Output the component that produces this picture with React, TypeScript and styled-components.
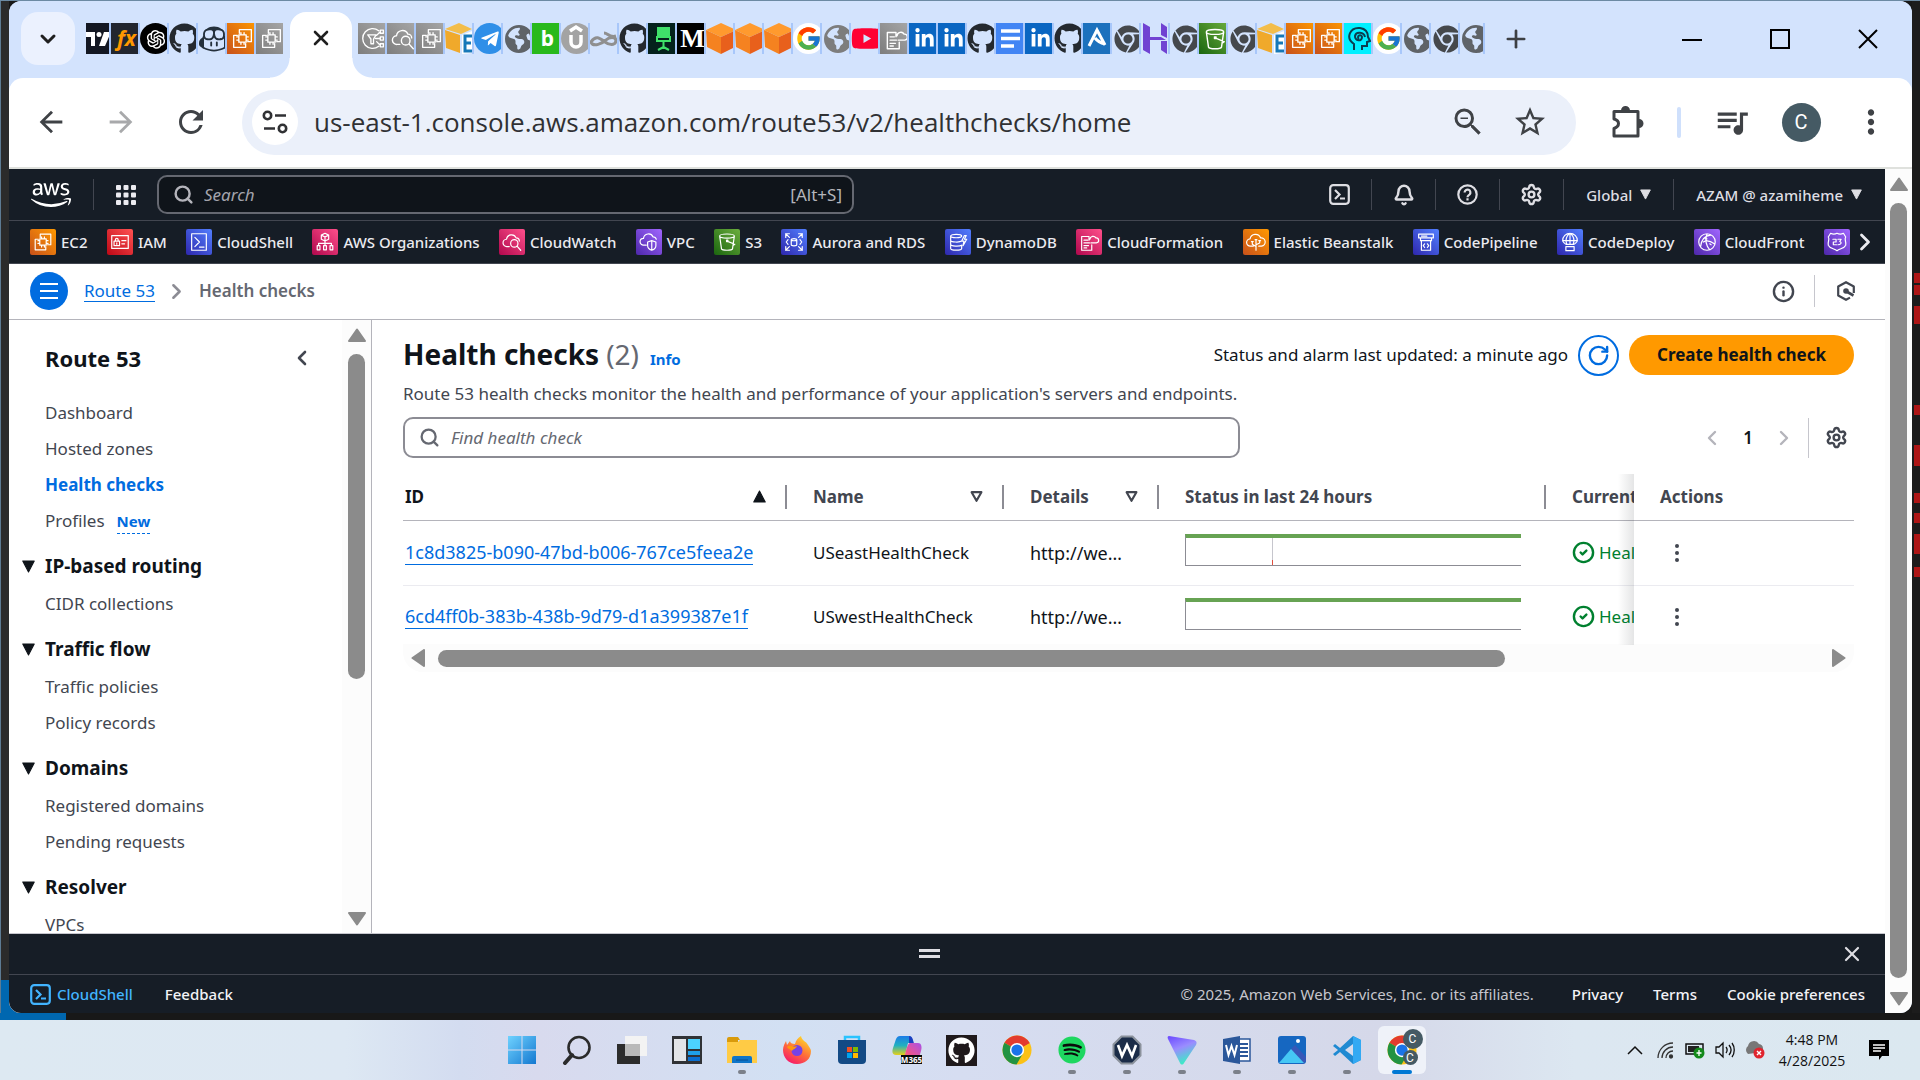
import React from "react";
import styled, { createGlobalStyle, css } from "styled-components";
import { Settings, Bell, Search, Info, RotateCw, X, Plus, ChevronDown, ChevronLeft, ChevronRight, CircleCheck } from "lucide-react";
import { FaGithub, FaYoutube, FaLinkedinIn, FaTelegramPlane, FaSpotify, FaAws, FaChrome } from "react-icons/fa";
import { FaEarthAmericas } from "react-icons/fa6";
import { FcGoogle } from "react-icons/fc";
import { GoCopilot } from "react-icons/go";
import { AiOutlineOpenAI } from "react-icons/ai";
import { MdArrowBack, MdArrowForward, MdRefresh, MdQueueMusic, MdStarBorder, MdOutlineZoomOut, MdMoreVert } from "react-icons/md";

const sans = `"Noto Sans", "Open Sans", sans-serif`;
const system = `"Open Sans", "Noto Sans", sans-serif`;

const c = {
  strip: "#d3e3fd",
  nav: "#161d26",
  navLine: "#424650",
  link: "#006ce0",
  body: "#0f141a",
  muted: "#424650",
  grey: "#656871",
  thumb: "#8b8b8b",
  green: "#00802f",
};

const GlobalStyle = createGlobalStyle`
  * { box-sizing: border-box; }
  body { margin: 0; font-family: ${sans}; font-size: 17px; line-height: 24px; color: ${c.body}; background: #181818; }
  button { font: inherit; color: inherit; background: none; border: 0; padding: 0; margin: 0; display: inline-flex; align-items: center; justify-content: center; flex: none; cursor: pointer; }
  input { font: inherit; color: inherit; background: none; border: 0; padding: 0; outline: 0; min-width: 0; }
  a { color: inherit; text-decoration: none; }
  svg { display: block; flex: none; }
  ul { list-style: none; margin: 0; padding: 0; }
`;

/* ---------- desktop shell ---------- */

const Desktop = styled.div`
  display: flex;
  flex-direction: column;
  height: 100vh;
  overflow: hidden;
  background: #181818;
`;
const Stage = styled.div`
  flex: 1;
  min-height: 0;
  display: flex;
  border-top: 1px solid #6c8aa3;
  padding-bottom: 7px;
  background: linear-gradient(90deg, #0067b0 66px, #181818 66px) bottom / 100% 40px no-repeat, #181818;
`;
const LeftEdge = styled.div`
  width: 9px;
  border-left: 1px solid #5d7b93;
  background: linear-gradient(#2b2b2b 979px, #0067b0 979px);
`;
const RightEdge = styled.div`
  width: 8px;
  padding-left: 2px;
  background: #1c1c1c;
  display: flex;
  flex-direction: column;
`;
const Marker = styled.i<{ $gap: number; $size: number }>`
  flex: none;
  margin-top: ${(p) => p.$gap}px;
  height: ${(p) => p.$size}px;
  background: #ad1616;
`;
const Window = styled.div`
  flex: 1;
  min-width: 0;
  display: flex;
  flex-direction: column;
  overflow: hidden;
  border-radius: 12px;
  background: ${c.strip};
`;

/* ---------- browser chrome ---------- */

const TabStrip = styled.div`
  height: 77px;
  flex: none;
  display: flex;
  align-items: center;
  padding: 0 0 2px 12px;
  background: ${c.strip};
`;
const TabSearch = styled.button`
  width: 54px;
  height: 53px;
  border-radius: 17px;
  background: #ebf1fe;
  margin-right: 11px;
`;
const Tab = styled.button`
  width: 29px;
  height: 31px;
  justify-content: flex-start;
  border-right: 2px solid #a8c7fa;
  overflow: hidden;
`;
const Tabs = styled.div<{ $lead?: boolean }>`
  display: flex;
  align-items: center;
  height: 31px;
  ${Tab}:${(p) => (p.$lead ? "first-child" : "last-child")} { width: 25px; }
  ${Tab}:last-child { ${(p) => (p.$lead ? "border-color: transparent;" : "")} }
`;
const Fav = styled.span<{ $bg?: string; $fg?: string; $round?: boolean }>`
  width: 31px;
  height: 31px;
  flex: none;
  display: flex;
  align-items: center;
  justify-content: center;
  background: ${(p) => p.$bg || "transparent"};
  color: ${(p) => p.$fg || "#fff"};
  border-radius: ${(p) => (p.$round ? "50%" : "0")};
  font: 700 21px/31px ${sans};
`;
const SerifLetter = styled.span`
  font-family: "Liberation Serif", serif;
  font-size: 26px;
`;
const ActiveTab = styled.button`
  position: relative;
  align-self: flex-end;
  width: 62px;
  height: 66px;
  margin: 0 6px -2px 5px;
  padding-bottom: 14px;
  background: #fff;
  border-radius: 16px 16px 0 0;
  &::before,
  &::after {
    content: "";
    position: absolute;
    bottom: 0;
    width: 20px;
    height: 20px;
  }
  &::before { right: 100%; background: radial-gradient(circle at 0 0, transparent 19px, #fff 20px); }
  &::after { left: 100%; background: radial-gradient(circle at 100% 0, transparent 19px, #fff 20px); }
`;
const NewTab = styled.button`
  width: 36px;
  height: 36px;
  margin-left: 13px;
  color: #3c3f43;
`;
const WindowControls = styled.div`
  margin-left: auto;
  display: flex;
`;
const WindowButton = styled.button`
  width: 88px;
  height: 60px;
`;
const Toolbar = styled.div`
  height: 91px;
  flex: none;
  display: flex;
  align-items: center;
  padding: 0 0 1px 7px;
  background: #fff;
  border-radius: 14px 14px 0 0;
  border-bottom: 2px solid #dfe1dd;
  color: #3f4246;
`;
const ToolButton = styled.button<{ $dim?: boolean; $w?: number }>`
  width: ${(p) => p.$w || 70}px;
  height: 60px;
  opacity: ${(p) => (p.$dim ? 0.45 : 1)};
`;
const Omnibox = styled.label`
  flex: 1;
  height: 65px;
  margin-left: 16px;
  padding: 0 15px 0 10px;
  display: flex;
  align-items: center;
  border-radius: 33px;
  background: #ebf0fa;
`;
const SiteInfo = styled.span`
  width: 46px;
  height: 46px;
  margin-right: 16px;
  border-radius: 50%;
  background: #fff;
  display: flex;
  align-items: center;
  justify-content: center;
`;
const Address = styled.input`
  flex: 1;
  font-family: ${system};
  font-size: 26px;
  line-height: 36px;
  height: 40px;
  color: #303134;
`;
const ToolDivider = styled.i`
  width: 4px;
  height: 31px;
  border-radius: 2px;
  background: #cfe0fc;
  margin-right: 10px;
`;
const Avatar = styled.span<{ $size: number }>`
  width: ${(p) => p.$size}px;
  height: ${(p) => p.$size}px;
  border-radius: 50%;
  background: #455a64;
  color: #fff;
  font: 400 ${(p) => (p.$size > 30 ? 20 : 12)}px/1 Roboto, sans-serif;
  display: flex;
  align-items: center;
  justify-content: center;
`;

/* ---------- page ---------- */

const Viewport = styled.div`
  flex: 1;
  min-height: 0;
  display: flex;
`;
const Page = styled.div`
  flex: 1;
  min-width: 0;
  display: flex;
  flex-direction: column;
  background: #fff;
`;
const ScrollTrack = styled.div<{ $w: number; $row?: boolean }>`
  flex: none;
  display: flex;
  align-items: center;
  background: #fcfcfc;
  color: ${c.thumb};
  ${(p) =>
    p.$row
      ? css`height: ${p.$w}px; padding: 0 8px; border-radius: 0 0 20px 20px;`
      : css`width: ${p.$w}px; padding: 8px 0 7px; flex-direction: column;`}
`;
const Thumb = styled.div<{ $share: number; $row?: boolean }>`
  background: ${c.thumb};
  border-radius: 9px;
  ${(p) => (p.$row ? css`height: 17px; margin-left: 13px;` : css`width: 17px; margin-top: 12px;`)}
  flex: ${(p) => p.$share} 0 0;
`;
const Rest = styled.div<{ $share: number }>`
  flex: ${(p) => p.$share} 0 0;
`;
const EndGap = styled.div`
  height: 14px;
  flex: none;
`;

const TopNav = styled.header`
  height: 52px;
  flex: none;
  display: flex;
  align-items: center;
  padding: 0 23px 0 22px;
  background: ${c.nav};
  border-bottom: 1px solid ${c.navLine};
  color: #dedee3;
  font-size: 15px;
  font-weight: 500;
`;
const NavDivider = styled.i<{ $gap?: boolean }>`
  width: 1px;
  height: 31px;
  margin-left: ${(p) => (p.$gap ? 22 : 0)}px;
  background: ${c.navLine};
`;
const NavSearch = styled.label`
  width: 697px;
  height: 39px;
  padding: 0 10px 0 14px;
  display: flex;
  align-items: center;
  gap: 10px;
  border: 2px solid #656871;
  border-radius: 10px;
  background: #0f141a;
  font-size: 17px;
  font-weight: 400;
  color: #b4b4bb;
  input { flex: 1; }
  input::placeholder { color: #a4a4ad; font-style: italic; opacity: 1; }
`;
const NavTools = styled.div`
  margin-left: auto;
  display: flex;
  align-items: center;
`;
const NavButton = styled.button<{ $text?: boolean }>`
  height: 40px;
  width: ${(p) => (p.$text ? "auto" : "63px")};
  padding: ${(p) => (p.$text ? "0 0 0 22px" : "0")};
  gap: 8px;
`;
const Favorites = styled.nav`
  height: 43px;
  flex: none;
  display: flex;
  align-items: center;
  padding: 0 6px 1px 21px;
  background: ${c.nav};
  border-bottom: 1px solid ${c.navLine};
  color: #ebebf0;
  font-size: 15px;
  font-weight: 500;
`;
const FavList = styled.ul`
  flex: 1;
  min-width: 0;
  display: flex;
  justify-content: space-between;
  padding-right: 1px;
  overflow: hidden;
`;
const FavLink = styled.a`
  display: flex;
  align-items: center;
  gap: 5px;
  white-space: nowrap;
`;
const Tile = styled.span<{ $bg: string }>`
  width: 26px;
  height: 26px;
  flex: none;
  display: flex;
  align-items: center;
  justify-content: center;
  border-radius: 2px;
  background: ${(p) => p.$bg};
`;
const CrumbBar = styled.div`
  height: 56px;
  flex: none;
  display: flex;
  align-items: center;
  padding: 0 9px 1px 21px;
  border-bottom: 1px solid #b4b4bb;
`;
const MenuButton = styled.button`
  width: 38px;
  height: 38px;
  border-radius: 50%;
  background: ${c.link};
  margin-right: 16px;
`;
const TextLink = styled.a<{ $wide?: boolean }>`
  color: ${c.link};
  border-bottom: 1px solid ${c.link};
  line-height: 21px;
  font-size: ${(p) => (p.$wide ? 18 : 17)}px;
`;
const CrumbNow = styled.span`
  font-weight: 600;
  color: ${c.grey};
`;
const CrumbSep = styled.span`
  width: 44px;
  display: flex;
  justify-content: center;
  color: #8c8c94;
`;
const CrumbTools = styled.div`
  margin-left: auto;
  display: flex;
  align-items: center;
  color: ${c.muted};
`;
const SquareButton = styled.button<{ $w?: number }>`
  width: ${(p) => p.$w || 61}px;
  height: 40px;
`;
const LightDivider = styled.i<{ $h: number }>`
  width: 1px;
  height: ${(p) => p.$h}px;
  background: #c6c6cd;
`;
const Body = styled.div`
  flex: 1;
  min-height: 0;
  display: flex;
  border-bottom: 1px solid #c6c6cd;
`;
const SideNav = styled.nav`
  width: 333px;
  flex: none;
  overflow: hidden;
  padding: 20px 0 0 13px;
`;
const SideTitle = styled.div`
  height: 36px;
  margin-bottom: 19px;
  padding: 0 28px 0 23px;
  display: flex;
  align-items: center;
  justify-content: space-between;
  font-size: 22px;
  font-weight: 700;
`;
const SideLink = styled.a<{ $on?: boolean }>`
  display: flex;
  align-items: center;
  height: 36px;
  padding-left: 23px;
  color: ${(p) => (p.$on ? c.link : c.muted)};
  font-weight: ${(p) => (p.$on ? 700 : 400)};
`;
const NewTag = styled.span`
  margin-left: 12px;
  font-size: 15px;
  font-weight: 700;
  color: ${c.link};
  border-bottom: 1px dashed ${c.link};
`;
const SideSection = styled.button`
  display: flex;
  justify-content: flex-start;
  gap: 10px;
  height: 28px;
  margin: 13px 0 6px;
  font-size: 19px;
  font-weight: 700;
`;
const Main = styled.main`
  flex: 1;
  min-width: 0;
  border-left: 1px solid #b4b4bb;
  padding: 15px 31px;
`;
const TitleRow = styled.div`
  display: flex;
  align-items: center;
  height: 40px;
`;
const Title = styled.h1`
  margin: 0;
  padding-bottom: 2px;
  font-size: 28px;
  line-height: 38px;
  font-weight: 700;
`;
const Count = styled.span`
  padding-bottom: 2px;
  font-size: 28px;
  color: ${c.grey};
  margin-left: 7px;
`;
const InfoLink = styled.a`
  margin: 8px 0 0 11px;
  font-size: 15px;
  font-weight: 700;
  color: ${c.link};
`;
const Updated = styled.span`
  margin: 0 10px 0 auto;
`;
const RefreshButton = styled.button`
  width: 41px;
  height: 41px;
  border: 2px solid ${c.link};
  border-radius: 50%;
  color: ${c.link};
  margin-right: 10px;
`;
const CreateButton = styled.button`
  height: 40px;
  padding: 0 28px;
  border-radius: 20px;
  background: #ff9900;
  font-weight: 700;
`;
const Lead = styled.p`
  margin: 7px 0 11px;
  color: ${c.muted};
`;
const FilterRow = styled.div`
  display: flex;
  align-items: center;
  justify-content: space-between;
  margin-bottom: 16px;
`;
const Filter = styled.label`
  width: 837px;
  height: 41px;
  padding: 0 14px;
  display: flex;
  align-items: center;
  gap: 11px;
  border: 2px solid #8c8c94;
  border-radius: 10px;
  color: ${c.grey};
  input { flex: 1; }
  input::placeholder { color: ${c.grey}; font-style: italic; opacity: 1; }
`;
const Pager = styled.div`
  display: flex;
  align-items: center;
  color: #b4b4bb;
  ${LightDivider} { margin-left: 6px; }
`;
const PagerButton = styled.button`
  width: 36px;
  height: 40px;
`;
const PageNumber = styled(PagerButton)`
  color: ${c.body};
  font-weight: 600;
`;
const GearButton = styled(SquareButton)`
  width: 45px;
  padding-left: 9px;
  color: ${c.muted};
`;
const Table = styled.table`
  width: 100%;
  table-layout: fixed;
  border-collapse: collapse;
`;
const Th = styled.th<{ $w?: number; $on?: boolean }>`
  width: ${(p) => (p.$w ? p.$w + "px" : "auto")};
  height: 46px;
  padding: 0;
  border-bottom: 1px solid #b4b4bb;
  text-align: left;
  color: ${(p) => (p.$on ? c.body : c.muted)};
  font-weight: 700;
`;
const ThInner = styled.div<{ $first?: boolean; $line?: boolean }>`
  display: flex;
  align-items: center;
  justify-content: space-between;
  height: 24px;
  padding: 0 19px 0 ${(p) => (p.$first ? 2 : 26)}px;
  border-right: ${(p) => (p.$line ? "2px solid #8c8c94" : "0")};
  white-space: nowrap;
`;
const Td = styled.td<{ $first?: boolean; $wide?: boolean }>`
  padding: 0 0 0 ${(p) => (p.$first ? 2 : 26)}px;
  font-size: ${(p) => (p.$wide ? "18px" : "inherit")};
  white-space: nowrap;
  overflow: hidden;
`;
const Row = styled.tr`
  height: 65px;
  border-bottom: 1px solid #ebebf0;
  &:last-child { height: 59px; border-bottom: 0; }
  &:last-child ${Td} { padding-top: 4px; }
`;
const stick = css`
  position: relative;
  overflow: visible;
  &::before {
    content: "";
    position: absolute;
    top: 0;
    bottom: -1px;
    right: 100%;
    width: 16px;
    background: linear-gradient(90deg, rgba(15, 20, 26, 0), rgba(15, 20, 26, 0.11));
  }
`;
const ActionTh = styled(Th)`${stick}`;
const ActionTd = styled(Td)`${stick}`;
const Healthy = styled.span`
  display: flex;
  align-items: center;
  gap: 4px;
  color: ${c.green};
`;
const Spark = styled.div`
  width: 336px;
  height: 32px;
  margin-bottom: 6px;
  border: 1px solid #8c8c94;
  border-top: 4px solid #67a353;
  border-right: 0;
  display: flex;
`;
const Spike = styled.i`
  width: 1px;
  margin-left: 86px;
  background: linear-gradient(#c6c6cd 22px, #e05040 22px);
`;

const Drawer = styled.div`
  height: 40px;
  flex: none;
  display: flex;
  align-items: center;
  justify-content: flex-end;
  padding: 0 21px 1px 10px;
  background: ${c.nav};
  color: #dedee3;
`;
const Grip = styled.span`
  width: 21px;
  height: 9px;
  margin: 0 auto;
  border: solid #dedee3;
  border-width: 3px 0;
`;
const Footer = styled.footer`
  height: 39px;
  flex: none;
  display: flex;
  align-items: center;
  padding: 0 20px 0 21px;
  background: ${c.nav};
  border-top: 1px solid ${c.navLine};
  font-size: 15px;
  font-weight: 500;
  color: #f3f3f7;
`;
const ShellButton = styled.button`
  gap: 6px;
  color: #42b4ff;
  margin-right: 32px;
`;
const Copyright = styled.span`
  margin: 0 8px 0 auto;
  font-weight: 400;
  color: #c6c6cd;
`;
const FooterLink = styled.a`
  margin-left: 30px;
`;

/* ---------- taskbar ---------- */

const Taskbar = styled.div`
  height: 60px;
  flex: none;
  display: grid;
  grid-template-columns: 1fr auto 1fr;
  align-items: center;
  padding-left: 3px;
  background: linear-gradient(90deg, #dde9f2 0, #dde8f3 18%, #d3dcf0 24%, #d8daee 28%, #d2e0f3 41%, #d6ddf1 50%, #d5d8e9 72%, #dce7f1 82%, #dbe8f0 100%);
  font-family: ${system};
`;
const Apps = styled.div`
  grid-column: 2;
  display: flex;
  gap: 7px;
`;
const App_ = styled.button<{ $active?: boolean; $running?: boolean }>`
  width: 48px;
  height: 48px;
  position: relative;
  border-radius: 6px;
  background: ${(p) => (p.$active ? "#eff2f9" : "transparent")};
  &::after {
    content: "";
    display: ${(p) => (p.$active || p.$running ? "block" : "none")};
    position: absolute;
    bottom: 0;
    width: ${(p) => (p.$active ? 20 : 8)}px;
    height: 4px;
    border-radius: 2px;
    background: ${(p) => (p.$active ? "#0078d4" : "#7b808a")};
  }
`;
const Badge = styled.span<{ $low?: boolean }>`
  position: absolute;
  right: ${(p) => (p.$low ? 8 : 3)}px;
  top: ${(p) => (p.$low ? 24 : 3)}px;
`;
const Tray = styled.div`
  justify-self: end;
  display: flex;
  align-items: center;
  padding-right: 6px;
  color: #111;
`;
const TrayButton = styled.button`
  width: 30px;
  height: 40px;
`;
const Clock = styled.time`
  width: 80px;
  margin-left: 2px;
  text-align: center;
  font-size: 14px;
  line-height: 21px;
`;
const Notice = styled.button`
  width: 40px;
  margin: 0 15px 0 7px;
`;

/* ---------- icons ---------- */

const glyphs: Record<string, string> = {
  ec2: "M9 7V3.5h11.500V15H17 M7 9H3.500v11.500H15V17 M8.500 8.500h7v7h-7z M10.500 6.500v2 M13.500 6.500v2 M10.500 15.500v2 M13.500 15.500v2 M6.500 10.500h2 M6.500 13.500h2 M15.500 10.500h2 M15.500 13.500h2",
  iam: "M3 5h18v14H3z M5.500 11h6v5h-6z M7 11V9.500a1.500 1.500 0 013 0V11 M8.500 13v1.500 M14 10.500h4.500 M14 14h3",
  shell: "M4 3h16v18H4z M7.500 7l5 5-5 5 M12.500 17.500h5",
  org: "M12 2.500l4 2v4.500l-4 2-4-2V4.500z M8 4.500l4 2 4-2 M12 6.500V16 M5 16v-2.500h14V16 M3.500 16h3v4.500h-3z M10.500 16h3v4.500h-3z M17.500 16h3v4.500h-3z",
  watch: "M9 17H6.500a4 4 0 01-.5-8 5.500 5.500 0 0110.500-1.500A3.500 3.500 0 0120 11 M14.500 9.500a4 4 0 100 8 4 4 0 000-8z M17.500 16.500l4 4.500",
  vpc: "M9 15.500H6a3.700 3.700 0 010-7.500 5.500 5.500 0 0110.500-1.500A3.500 3.500 0 0120 9 M15 10.500l4.500 1.500v4c0 2.500-2 4-4.500 5-2.500-1-4.500-2.500-4.500-5v-4z M15 10.500V21",
  s3: "M4 5.500c0-3 16-3 16 0s-16 3-16 0z M4 5.500L6 19.500c1 2 11 2 12 0L20 5.500 M12 11l8.500 3.500-1.500 1 M11.500 10h1.500v1.500h-1.500z",
  rds: "M9 9.500c0-1.500 6-1.500 6 0v5.500c0 1.500-6 1.500-6 0z M9 9.500c0 1.500 6 1.500 6 0 M3 7V3h4 M3 3l4 4 M17 3h4v4 M21 3l-4 4 M3 17v4h4 M3 21l4-4 M17 21h4v-4 M21 21l-4-4 M5.500 9.500L3.500 12l2 2.500 M18.500 9.500l2 2.500-2 2.500",
  dynamo: "M4 5.500c0-2.500 12-2.500 12 0s-12 2.500-12 0z M4 5.500v13.500c0 2.500 12 2.500 12 0v-3 M4 10c0 2.500 10 2.500 12 1 M4 14.500c0 2.500 10 2.500 12 1 M19 5l-3 6h2.500l-1 5 4-7h-2.500L21 5z",
  cfn: "M12 10V6H4v15h11v-6 M6.500 10h4 M6.500 13h6 M6.500 16h5 M6.500 18.500h3 M13 9a3.500 3.500 0 016.500-1.500A2.700 2.700 0 0120 13h-6",
  beanstalk: "M9 16.500H6a4 4 0 01-.5-8A6 6 0 0117 7.500a4.500 4.500 0 011 9h-3 M12 21V10 M12 17l-4-2.500V12 M12 15l4-2v-2 M11 9.500h2 M7 11.500h2 M15 10.500h2",
  pipeline: "M4 3.500h16v4H4z M6 7.500v3h12v-3 M7 11v10h10V11 M10.500 14l-1.500 2 1.500 2 M13.500 14l1.500 2-1.500 2 M7 5.500h6",
  deploy: "M4 10.500a8 8 0 0116 0c0 1-3 4-4 4H8c-1 0-4-3-4-4z M4 10.500h16 M12 2.500v12 M8.500 14.500c-3-8 3.500-12 3.500-12s6.500 4 3.500 12 M7.500 17h9v4.500h-9z",
  front: "M12 3a9 9 0 100 18 9 9 0 000-18z M5 17c1-9 6-12 11-12.500 M12 3c-2 6-1 13 3 17.500 M8 12c3-2 8-1 12 2 M10 8.500h2 M15 14l1.500 1",
  r53: "M12 2.500c3 1.500 5 1 7 0l2.500 4c-2 3 1 5 0 9C20 19 15 19 12 21.500 9 19 4 19 2.500 15.500c-1-4 2-6 0-9l2.500-4c2 1 4 1.500 7 0z M7.500 9h3.500v3H8v3h3.500 M13 9h3.500l-1.500 2.500c3 1 1 3.500-2 3.500",
  balancer: "M17 4.500a9.500 9.500 0 100 15 M6.500 8.500h8l-2.500 4V17H9.500v-4.500z M14 12h4 M15 9l3-3 M15 15l3 3 M18.500 4h3v3h-3z M18.500 10.500h3v3h-3z M18.500 17h3v3h-3z",
};
const Glyph = ({ name, size = 22, color = "#fff" }: { name: string; size?: number; color?: string }) => (
  <svg width={size} height={size} viewBox="0 0 24 24" fill="none" stroke={color} strokeWidth="1.3" strokeLinejoin="round" strokeLinecap="round">
    <path d={glyphs[name]} />
  </svg>
);
const orange = "linear-gradient(45deg,#c8511b,#ff9900)";
const silver = "linear-gradient(45deg,#7d7d7d,#a8a8a8)";
const pink = "linear-gradient(45deg,#b0084d,#ff4f8b)";
const blue = "linear-gradient(45deg,#2e27ad,#527fff)";
const purple = "linear-gradient(45deg,#4d27aa,#a166ff)";
const green = "linear-gradient(45deg,#1b660f,#6cae3e)";
const red = "linear-gradient(45deg,#bd0816,#ff5252)";

const Triangle = ({ dir = "down", hollow = false, size = 12 }: { dir?: "up" | "down"; hollow?: boolean; size?: number }) => (
  <svg width={size} height={size} viewBox="0 0 12 12" fill={hollow ? "none" : "currentColor"} stroke="currentColor" strokeWidth={hollow ? 2 : 1} strokeLinejoin="round">
    <path d={dir === "up" ? "M6 1L11.300 11H.7z" : hollow ? "M1.500 2h9L6 10z" : "M.7 1h10.600L6 11z"} />
  </svg>
);
const ScrollArrow = ({ d }: { d: "up" | "down" | "left" | "right" }) => {
  const row = d === "left" || d === "right";
  const paths = { up: "M9 1.500L17 13H1z", down: "M9 12.500L1 1h16z", left: "M1.500 9L13 1v16z", right: "M12.500 9L1 17V1z" };
  return (
    <svg width={row ? 14 : 18} height={row ? 18 : 14} viewBox={row ? "0 0 14 18" : "0 0 18 14"} fill="currentColor" stroke="currentColor" strokeWidth="2" strokeLinejoin="round">
      <path d={paths[d]} />
    </svg>
  );
};
const TerminalIcon = () => (
  <svg width="21" height="21" viewBox="0 0 21 21" fill="none" stroke="currentColor" strokeWidth="2.200">
    <rect x="1.200" y="1.200" width="18.600" height="18.600" rx="3" />
    <path d="M6 6l4.500 4.500L6 15M11 14.500h5" />
  </svg>
);
const HelpIcon = () => (
  <svg width="21" height="21" viewBox="0 0 21 21" fill="none" stroke="currentColor" strokeWidth="2.200">
    <circle cx="10.500" cy="10.500" r="9.200" />
    <path d="M7.600 8.500a2.900 2.900 0 115 2c-1.200 1-2.100 1.200-2.100 2.700M10.500 14.200v2.300" />
  </svg>
);
const HexIcon = () => (
  <svg width="20" height="20" viewBox="0 0 20 20" fill="none" stroke="currentColor" strokeWidth="2.200">
    <path d="M17.800 12V5.500L10 1.200 2.200 5.500v9L10 18.800l4-2.200" strokeLinejoin="round" />
    <circle cx="10" cy="10" r="2.800" fill="currentColor" stroke="none" />
    <path d="M10.500 10.500l7 4" strokeWidth="2.600" />
  </svg>
);
const PuzzleIcon = () => (
  <svg width="34" height="36" viewBox="0 0 34 36" fill="none" stroke="currentColor" strokeWidth="3" strokeLinejoin="round">
    <path d="M4 7.500h24v24.500H4v-7.500c6-2 6-8 0-9.500z" />
    <path d="M11 6.500a4.500 4.500 0 019 0zM29 15a4.500 4.500 0 010 9z" fill="currentColor" stroke="none" />
  </svg>
);
const Dots = () => (
  <svg width="6" height="20" viewBox="0 0 6 20" fill={c.muted}>
    <circle cx="3" cy="3" r="2" /><circle cx="3" cy="10" r="2" /><circle cx="3" cy="17" r="2" />
  </svg>
);
const SiteIcon = () => (
  <svg width="26" height="24" viewBox="0 0 26 24" fill="none" stroke="#303134" strokeWidth="2.600">
    <circle cx="5.500" cy="5.500" r="3.700" /><path d="M13 5.500h11M2 18.500h11" /><circle cx="20.500" cy="18.500" r="3.700" />
  </svg>
);
const Cube = () => (
  <svg width="31" height="31" viewBox="0 0 31 31">
    <path d="M15 0L30 7 15 14 0 7z" fill="#ff9a2e" /><path d="M0 7l15 7v17L1 24z" fill="#f58220" /><path d="M30 7l-15 7v17l14-7z" fill="#e8601c" />
  </svg>
);
const EBox = () => (
  <svg width="31" height="31" viewBox="0 0 31 31">
    <path d="M14 0l13 6-11 5L0 6z" fill="#f3bd4a" /><path d="M0 7l15 5v18L1 25z" fill="#f0a92b" /><path d="M17 12l10-4v22l-10 1z" fill="#fff" />
    <path d="M27 13h-7v15h7M20 20h6" fill="none" stroke="#1678b8" strokeWidth="3" />
  </svg>
);
const Wheel = ({ size = 31, colored = false }: { size?: number; colored?: boolean }) =>
  colored ? (
    <svg width={size} height={size} viewBox="0 0 32 32">
      <circle cx="16" cy="16" r="15.500" fill="#fbc116" />
      <path d="M16 16L2.600 8.300A15.500 15.500 0 0129.400 8.300z" fill="#e33b2e" />
      <path d="M2.600 8.300A15.500 15.500 0 0015.500 31.500l7-12L16 16z" fill="#229342" />
      <path d="M16 8.500h13.500L16 16z" fill="#e33b2e" />
      <circle cx="16" cy="16" r="7.600" fill="#fff" /><circle cx="16" cy="16" r="6" fill="#1a73e8" />
    </svg>
  ) : (
    <FaChrome size={28} />
  );

type TabSpec = [string, React.ReactNode, string?, string?, boolean?];
const ec2Fav = <Glyph name="ec2" size={25} />;
const leftTabs: TabSpec[] = [
  ["TradingView", <svg width="31" height="31" viewBox="0 0 31 31" fill="#fff"><path d="M0 9h9v14H5V14H0z" /><circle cx="13" cy="11.500" r="2.500" /><path d="M18 9h7l-6 14h-6z" /></svg>, "#131722"],
  ["fx", <i>fx</i>, "#22262f", "#ff9800"],
  ["ChatGPT", <AiOutlineOpenAI size={24} />, "#000", "#fff", true],
  ["GitHub", <FaGithub size={31} />, "", "#24292f"],
  ["Copilot", <GoCopilot size={30} />, "", "#24303c"],
  ["EC2", ec2Fav, orange],
  ["EC2", ec2Fav, silver],
];
const globe = <FaEarthAmericas size={28} />;
const gh: TabSpec = ["GitHub", <FaGithub size={31} />, "", "#24292f"];
const li: TabSpec = ["LinkedIn", <Fav $bg="#0a66c2"><FaLinkedinIn size={21} /></Fav>];
const ch: TabSpec = ["Chrome", <Wheel />, "", "#45484c"];
const goog: TabSpec = ["Google", <FcGoogle size={27} />, "#fff", "", true];
const rightTabs: TabSpec[] = [
  ["Load balancer", <Glyph name="balancer" size={25} />, silver],
  ["CloudWatch", <Glyph name="watch" size={26} />, silver],
  ["EC2", ec2Fav, silver],
  ["ECR", <EBox />],
  ["Telegram", <FaTelegramPlane size={20} />, "#2f8fe8", "#fff", true],
  ["Site", globe, "", "#5f6368"],
  ["b", "b", "#29b91c"],
  ["Upload", <svg width="31" height="31" viewBox="0 0 31 31" fill="none" stroke="#fff" strokeWidth="3.500"><path d="M10 12v7a5 5 0 0010 0v-7M9 8l6-4 6 4" /></svg>, "#a3a3a3", "#fff", true],
  ["Link", <svg width="31" height="31" viewBox="0 0 31 31" fill="none" stroke="#8f8f8f" strokeWidth="3"><path d="M1 19c5-8 10-3 14 0s10 4 11-1c0-5-7-4-10-1S3 25 1 19zM14 10c4 0 5 5 12 3" /></svg>],
  gh,
  ["Chair", <svg width="31" height="31" viewBox="0 0 31 31" fill="none" stroke="#3fe06a" strokeWidth="2"><path d="M10 5h11v9H10z" fill="#3fe06a" /><path d="M9 13v5h13v-5M15.500 18v8M10 27l5.500-3 5.500 3" /></svg>, "#04211c"],
  ["Medium", <SerifLetter>M</SerifLetter>, "#000"],
  ["Cube", <Cube />],
  ["Cube", <Cube />],
  ["Cube", <Cube />],
  goog,
  ["Site", globe, "", "#7d7d7d"],
  ["YouTube", <FaYoutube size={31} />, "", "#ff0033"],
  ["CloudFormation", <Glyph name="cfn" size={26} />, silver],
  li,
  li,
  gh,
  ["Docs", <svg width="31" height="31" viewBox="0 0 31 31" stroke="#fff" strokeWidth="3.500"><path d="M5 8h19M5 15.500h19M5 23h13" /></svg>, "#4285f4"],
  li,
  gh,
  ["A", <svg width="31" height="31" viewBox="0 0 31 31" fill="none" stroke="#fff" strokeWidth="3"><path d="M6 23l8-16 8 15M12 15c3 4 6 5 10 6" /></svg>, "#1c71bd"],
  ch,
  ["H", <svg width="31" height="31" viewBox="0 0 31 31" fill="#7042d2"><path d="M2 0l7 4v10h11l5 3H9v14l-7-4zM26 31l-6-4V18h6zM20 0l6 4v11l-6-3z" /></svg>],
  ch,
  ["S3", <Glyph name="s3" size={26} />, green],
  ch,
  ["ECR", <EBox />],
  ["EC2", ec2Fav, orange],
  ["EC2", ec2Fav, orange],
  ["Mind", <svg width="31" height="31" viewBox="0 0 31 31" fill="none" stroke="#0b3f4f" strokeWidth="2"><path d="M10 27v-6c-9-6-4-17 6-16 7 1 8 6 8 9l2 4-3 1v4h-5v4M15 16a2 2 0 113-2c0 5-7 4-7-1 1-5 9-4 10 1" /></svg>, "#00f0ff"],
  goog,
  ["Site", globe, "", "#5f6368"],
  ch,
  ["Site", globe, "", "#5f6368"],
];
const TabIcon = ({ t }: { t: TabSpec }) => (
  <Tab aria-label={t[0]}>
    <Fav $bg={t[2]} $fg={t[3]} $round={t[4]}>{t[1]}</Fav>
  </Tab>
);

const services: [string, string, string][] = [
  ["EC2", "ec2", orange],
  ["IAM", "iam", red],
  ["CloudShell", "shell", blue],
  ["AWS Organizations", "org", pink],
  ["CloudWatch", "watch", pink],
  ["VPC", "vpc", purple],
  ["S3", "s3", green],
  ["Aurora and RDS", "rds", blue],
  ["DynamoDB", "dynamo", blue],
  ["CloudFormation", "cfn", pink],
  ["Elastic Beanstalk", "beanstalk", orange],
  ["CodePipeline", "pipeline", blue],
  ["CodeDeploy", "deploy", blue],
  ["CloudFront", "front", purple],
];

const checks = [
  { id: "1c8d3825-b090-47bd-b006-767ce5feea2e", name: "USeastHealthCheck", spike: true },
  { id: "6cd4ff0b-383b-438b-9d79-d1a399387e1f", name: "USwestHealthCheck", spike: false },
];

const sections: [string, string[]][] = [
  ["IP-based routing", ["CIDR collections"]],
  ["Traffic flow", ["Traffic policies", "Policy records"]],
  ["Domains", ["Registered domains", "Pending requests"]],
  ["Resolver", ["VPCs"]],
];

const apps: [string, React.ReactNode, boolean][] = [
  ["Start", <svg width="30" height="30" viewBox="0 0 30 30"><defs><linearGradient id="win" x1="0" y1="0" x2="1" y2="1"><stop offset="0" stopColor="#6fd2ff" /><stop offset="1" stopColor="#1478d0" /></linearGradient></defs><path fill="url(#win)" d="M1 1h13.500v13.500H1zM15.500 1H29v13.500H15.500zM1 15.500h13.500V29H1zM15.500 15.500H29V29H15.500z" /></svg>, false],
  ["Search", <svg width="30" height="30" viewBox="0 0 30 30" fill="none" stroke="#2b2b2b" strokeWidth="2.600"><circle cx="17" cy="12.500" r="10.500" /><path d="M10 20l-7 8" strokeWidth="4" strokeLinecap="round" /></svg>, false],
  ["Task view", <svg width="32" height="30" viewBox="0 0 32 30"><path d="M1 9h23v20H1z" fill="#2c2c2c" /><path d="M9 1h22v20H9z" fill="#f3f3f3" /><path d="M9 9h15v12H9z" fill="#b9b9b9" /></svg>, false],
  ["Widgets", <svg width="30" height="28" viewBox="0 0 30 28"><path d="M0 0h30v28H0z" fill="#303236" /><path d="M2 3h12v22H2z" fill="#e3e5e8" /><path d="M16 3h12v10H16z" fill="#4cd2ff" /><path d="M16 15h12v4H16z" fill="#1fa0e8" /><path d="M16 21h12v4H16z" fill="#0a6fd0" /></svg>, false],
  ["File Explorer", <svg width="30" height="28" viewBox="0 0 30 28"><path d="M0 3a2 2 0 012-2h9l2 3h-2v3H0z" fill="#d99a0b" /><path d="M0 6h11l2-2h17v23H0z" fill="#ffcb45" /><path d="M5 27v-5a2 2 0 012-2h16a2 2 0 012 2v5z" fill="#0f75c8" /><path d="M9 24h12" stroke="#084f90" /></svg>, true],
  ["Firefox", <svg width="30" height="30" viewBox="0 0 30 30"><defs><linearGradient id="ff" x1=".8" y1="0" x2=".2" y2="1"><stop offset="0" stopColor="#ffe226" /><stop offset=".5" stopColor="#ff7139" /><stop offset="1" stopColor="#f5126d" /></linearGradient></defs><path fill="url(#ff)" d="M15 29C6 29 1 22 1 15c0-4 2-7 3-9l1 4 3-4c0 2 2 3 5 3 1-4 3-6 6-8 1 5 5 5 7 9 1 2 3 4 3 6 0 8-6 13-14 13z" /><circle cx="15" cy="15.500" r="5.500" fill="#7542e5" /><path d="M5 12c4-3 6 1 10-1-1 3-4 3-5 5-2-2-4-2-5-4z" fill="#ff980e" /></svg>, false],
  ["Store", <svg width="30" height="30" viewBox="0 0 30 30"><path d="M8 6V2h14v4" fill="none" stroke="#29c3ff" strokeWidth="2.500" /><path d="M1 5h28v20a4 4 0 01-4 4H5a4 4 0 01-4-4z" fill="#134a85" /><path d="M10 12h5v5h-5z" fill="#f25022" /><path d="M16 12h5v5h-5z" fill="#7fba00" /><path d="M10 18h5v5h-5z" fill="#00a4ef" /><path d="M16 18h5v5h-5z" fill="#ffb900" /></svg>, false],
  ["Microsoft 365", <svg width="32" height="30" viewBox="0 0 32 30"><defs><linearGradient id="ma" x1="0" y1="0" x2="0" y2="1"><stop offset="0" stopColor="#1b7be8" /><stop offset=".5" stopColor="#20b0c0" /><stop offset="1" stopColor="#e8d018" /></linearGradient><linearGradient id="mb" x1="1" y1="0" x2="0" y2="1"><stop offset="0" stopColor="#a850e8" /><stop offset=".6" stopColor="#f0568c" /><stop offset="1" stopColor="#ff9040" /></linearGradient></defs><path d="M9 1h9c3 0 4 4 3 7h-4l-3 12H5c-4 0-4-4-3-7l3-9c1-2 2-3 4-3z" fill="url(#ma)" /><path d="M18 1c4 0 4 5 5 7h-5z" fill="#1b3fc0" /><path d="M19 8h8c4 0 4 5 3 8l-3 10H12c-3 0-3-2-2-4h3c2-4 3-14 6-14z" fill="url(#mb)" /><path d="M10 20h21v9H10z" fill="#0a0a0a" /><text x="20.500" y="27.500" fontSize="8" fontWeight="700" fill="#fff" textAnchor="middle" fontFamily="Open Sans, sans-serif">M365</text></svg>, false],
  ["GitHub", <Fav $bg="#1f191b"><FaGithub size={27} /></Fav>, false],
  ["Chrome", <Wheel size={30} colored />, false],
  ["Spotify", <Fav $fg="#1ed760" $bg="radial-gradient(circle,#0b0b0b 50%,transparent 52%)"><FaSpotify size={28} /></Fav>, true],
  ["Waves", <svg width="30" height="30" viewBox="0 0 30 30"><path d="M9.500 1.500h11l8 8v11l-8 8h-11l-8-8v-11z" fill="#1b2c48" stroke="#8b929c" strokeWidth="2" /><path d="M6 10l4 11 5-11 5 11 4-11" fill="none" stroke="#fff" strokeWidth="2.600" /></svg>, true],
  ["Proton", <svg width="30" height="30" viewBox="0 0 30 30"><defs><linearGradient id="pr" x1="0" y1="0" x2=".4" y2="1"><stop offset="0" stopColor="#6a48ff" /><stop offset=".5" stopColor="#9a8cff" /><stop offset="1" stopColor="#3fe8c8" /></linearGradient></defs><path d="M2 1l25 4c3 1 3 3 2 5L17 28c-1 2-3 2-4 0L1 4c-1-2 0-3 1-3z" fill="url(#pr)" /></svg>, true],
  ["Word", <svg width="30" height="30" viewBox="0 0 30 30"><path d="M14 4h14v22H14z" fill="#fff" stroke="#2b579a" strokeWidth="1.500" /><path d="M17 9h9M17 13h9M17 17h9M17 21h9" stroke="#2b579a" strokeWidth="2" /><path d="M1 4l17-3v28L1 26z" fill="#2b579a" /><path d="M4 10l2.500 10L9.500 11l3 9L15 10" fill="none" stroke="#fff" strokeWidth="2" /></svg>, true],
  ["Photos", <svg width="28" height="28" viewBox="0 0 28 28"><rect width="28" height="28" rx="3" fill="#1667c1" /><path d="M12 14l5-5 11 12v4l-3 3z" fill="#3858b8" /><path d="M1 27l12-14 13 14z" fill="#45c7f4" /><circle cx="20" cy="5" r="2" fill="#fff" /></svg>, true],
  ["VS Code", <svg width="30" height="30" viewBox="0 0 30 30"><path d="M21 1l8 4v20l-8 4L8 17l-5 4-2-2 5-4-5-4 2-2 5 4z" fill="#1f8ad2" /><path d="M21 9v12l-8-6z" fill="#d5dcee" /><path d="M21 1l8 4v20l-8 4z" fill="#32a9f3" /></svg>, true],
];

/* ---------- app ---------- */

export default function App() {
  return (
    <Desktop>
      <GlobalStyle />
      <Stage>
        <LeftEdge />
        <Window>
          <TabStrip>
            <TabSearch aria-label="Search tabs"><ChevronDown size={24} strokeWidth={3} color="#1f1f1f" /></TabSearch>
            <Tabs $lead>{leftTabs.map((t, i) => <TabIcon key={i} t={t} />)}</Tabs>
            <ActiveTab aria-label="Close tab"><X size={24} strokeWidth={2.600} color="#1f1f1f" /></ActiveTab>
            <Tabs>{rightTabs.map((t, i) => <TabIcon key={i} t={t} />)}</Tabs>
            <NewTab aria-label="New tab"><Plus size={28} strokeWidth={2.300} /></NewTab>
            <WindowControls>
              <WindowButton aria-label="Minimize"><svg width="20" height="20" stroke="#000" strokeWidth="2"><path d="M0 11h20" /></svg></WindowButton>
              <WindowButton aria-label="Maximize"><svg width="20" height="20" fill="none" stroke="#000" strokeWidth="2"><path d="M1 1h18v18H1z" /></svg></WindowButton>
              <WindowButton aria-label="Close"><svg width="20" height="20" stroke="#000" strokeWidth="2"><path d="M1 1l18 18M19 1L1 19" /></svg></WindowButton>
            </WindowControls>
          </TabStrip>
          <Toolbar>
            <ToolButton aria-label="Back"><MdArrowBack size={34} /></ToolButton>
            <ToolButton aria-label="Forward" $dim><MdArrowForward size={34} /></ToolButton>
            <ToolButton aria-label="Reload"><MdRefresh size={36} /></ToolButton>
            <Omnibox>
              <SiteInfo><SiteIcon /></SiteInfo>
              <Address aria-label="Address" defaultValue="us-east-1.console.aws.amazon.com/route53/v2/healthchecks/home" />
              <ToolButton aria-label="Zoom" $w={62}><MdOutlineZoomOut size={36} /></ToolButton>
              <ToolButton aria-label="Bookmark" $w={62}><MdStarBorder size={36} /></ToolButton>
            </Omnibox>
            <ToolButton aria-label="Extensions" $w={101}><PuzzleIcon /></ToolButton>
            <ToolDivider />
            <ToolButton aria-label="Media" $w={81}><MdQueueMusic size={38} /></ToolButton>
            <ToolButton aria-label="Profile" $w={58}><Avatar $size={39}>C</Avatar></ToolButton>
            <ToolButton aria-label="Menu" $w={82}><MdMoreVert size={38} /></ToolButton>
          </Toolbar>
          <Viewport>
            <Page>
              <TopNav>
                <a href="#home" aria-label="AWS"><FaAws size={40} color="#fff" /></a>
                <NavDivider $gap />
                <NavButton aria-label="Services">
                  <svg width="20" height="20" fill="#ebebf0">
                    {[0, 1, 2].map((r) => [0, 1, 2].map((q) => <rect key={r + "-" + q} x={q * 7.500} y={r * 7.500} width="5" height="5" rx="1" />))}
                  </svg>
                </NavButton>
                <NavSearch>
                  <Search size={21} strokeWidth={2.800} />
                  <input placeholder="Search" aria-label="Search" />
                  <span>[Alt+S]</span>
                </NavSearch>
                <NavTools>
                  <NavButton aria-label="CloudShell"><TerminalIcon /></NavButton>
                  <NavDivider />
                  <NavButton aria-label="Notifications"><Bell size={22} strokeWidth={2.700} /></NavButton>
                  <NavDivider />
                  <NavButton aria-label="Help"><HelpIcon /></NavButton>
                  <NavDivider />
                  <NavButton aria-label="Settings"><Settings size={23} strokeWidth={2.500} /></NavButton>
                  <NavDivider />
                  <NavButton $text>Global <Triangle size={11} /></NavButton>
                  <NavDivider $gap />
                  <NavButton $text>AZAM @ azamiheme <Triangle size={11} /></NavButton>
                </NavTools>
              </TopNav>
              <Favorites aria-label="Favorites">
                <FavList>
                  {services.map(([label, icon, bg]) => (
                    <li key={label}>
                      <FavLink href="#service"><Tile $bg={bg}><Glyph name={icon} /></Tile>{label}</FavLink>
                    </li>
                  ))}
                  <li><FavLink href="#service" aria-label="Route 53"><Tile $bg={purple}><Glyph name="r53" /></Tile></FavLink></li>
                </FavList>
                <button aria-label="More favorites"><ChevronRight size={28} strokeWidth={2.400} /></button>
              </Favorites>
              <CrumbBar>
                <MenuButton aria-label="Toggle navigation">
                  <svg width="18" height="16" stroke="#fff" strokeWidth="2"><path d="M0 1h18M0 8h18M0 15h18" /></svg>
                </MenuButton>
                <TextLink href="#route53">Route 53</TextLink>
                <CrumbSep><ChevronRight size={25} strokeWidth={2.400} /></CrumbSep>
                <CrumbNow>Health checks</CrumbNow>
                <CrumbTools>
                  <SquareButton aria-label="Info"><Info size={23} strokeWidth={2.500} /></SquareButton>
                  <LightDivider $h={32} />
                  <SquareButton aria-label="Assistant"><HexIcon /></SquareButton>
                </CrumbTools>
              </CrumbBar>
              <Body>
                <SideNav>
                  <SideTitle>
                    Route 53
                    <button aria-label="Close navigation"><ChevronLeft size={24} strokeWidth={2.600} color={c.muted} /></button>
                  </SideTitle>
                  <SideLink href="#dashboard">Dashboard</SideLink>
                  <SideLink href="#zones">Hosted zones</SideLink>
                  <SideLink href="#checks" $on>Health checks</SideLink>
                  <SideLink href="#profiles">Profiles<NewTag>New</NewTag></SideLink>
                  {sections.map(([title, links]) => (
                    <div key={title}>
                      <SideSection><Triangle size={13} />{title}</SideSection>
                      {links.map((l) => <SideLink key={l} href="#link">{l}</SideLink>)}
                    </div>
                  ))}
                </SideNav>
                <ScrollTrack $w={29}>
                  <ScrollArrow d="up" />
                  <Thumb $share={325} />
                  <Rest $share={233} />
                  <ScrollArrow d="down" />
                </ScrollTrack>
                <Main>
                  <TitleRow>
                    <Title>Health checks</Title>
                    <Count>(2)</Count>
                    <InfoLink href="#info">Info</InfoLink>
                    <Updated>Status and alarm last updated: a minute ago</Updated>
                    <RefreshButton aria-label="Refresh"><RotateCw size={23} strokeWidth={2.500} /></RefreshButton>
                    <CreateButton>Create health check</CreateButton>
                  </TitleRow>
                  <Lead>Route 53 health checks monitor the health and performance of your application's servers and endpoints.</Lead>
                  <FilterRow>
                    <Filter>
                      <Search size={21} strokeWidth={2.600} />
                      <input placeholder="Find health check" aria-label="Find health check" />
                    </Filter>
                    <Pager>
                      <PagerButton aria-label="Previous page"><ChevronLeft size={24} strokeWidth={2.400} /></PagerButton>
                      <PageNumber>1</PageNumber>
                      <PagerButton aria-label="Next page"><ChevronRight size={24} strokeWidth={2.400} /></PagerButton>
                      <LightDivider $h={40} />
                      <GearButton aria-label="Preferences"><Settings size={23} strokeWidth={2.500} /></GearButton>
                    </Pager>
                  </FilterRow>
                  <Table>
                    <thead>
                      <tr>
                        <Th $w={384} $on><ThInner $first $line>ID<Triangle dir="up" size={13} /></ThInner></Th>
                        <Th $w={217}><ThInner $line>Name<Triangle hollow size={13} /></ThInner></Th>
                        <Th $w={155}><ThInner $line>Details<Triangle hollow size={13} /></ThInner></Th>
                        <Th $w={387}><ThInner $line>Status in last 24 hours</ThInner></Th>
                        <Th $w={88}><Td as="div">Current</Td></Th>
                        <ActionTh><ThInner>Actions</ThInner></ActionTh>
                      </tr>
                    </thead>
                    <tbody>
                      {checks.map((r) => (
                        <Row key={r.id}>
                          <Td $first><TextLink $wide href="#check">{r.id}</TextLink></Td>
                          <Td>{r.name}</Td>
                          <Td $wide>http://we…</Td>
                          <Td><Spark>{r.spike && <Spike />}</Spark></Td>
                          <Td><Healthy><CircleCheck size={23} strokeWidth={2.500} />Healthy</Healthy></Td>
                          <ActionTd><SquareButton $w={34} aria-label="Row actions"><Dots /></SquareButton></ActionTd>
                        </Row>
                      ))}
                    </tbody>
                  </Table>
                  <ScrollTrack $w={28} $row>
                    <ScrollArrow d="left" />
                    <Thumb $share={1066} $row />
                    <Rest $share={327} />
                    <ScrollArrow d="right" />
                  </ScrollTrack>
                </Main>
              </Body>
              <Drawer>
                <Grip />
                <button aria-label="Close drawer"><X size={24} strokeWidth={2.200} /></button>
              </Drawer>
              <Footer>
                <ShellButton><TerminalIcon />CloudShell</ShellButton>
                <button>Feedback</button>
                <Copyright>© 2025, Amazon Web Services, Inc. or its affiliates.</Copyright>
                <FooterLink href="#privacy">Privacy</FooterLink>
                <FooterLink href="#terms">Terms</FooterLink>
                <FooterLink href="#cookies">Cookie preferences</FooterLink>
              </Footer>
            </Page>
            <ScrollTrack $w={27}>
              <ScrollArrow d="up" />
              <Thumb $share={1} />
              <EndGap />
              <ScrollArrow d="down" />
            </ScrollTrack>
          </Viewport>
        </Window>
        <RightEdge>
          {[[272, 10], [2, 10], [11, 18], [81, 10], [30, 21], [27, 10], [10, 10], [11, 20], [13, 10]].map(([g, s], i) => <Marker key={i} $gap={g} $size={s} />)}
        </RightEdge>
      </Stage>
      <Taskbar>
        <Apps>
          {apps.map(([name, icon, running]) => <App_ key={name} aria-label={name} $running={running}>{icon}</App_>)}
          <App_ $active aria-label="Chrome window">
            <Wheel size={30} colored />
            <Badge><Avatar $size={20}>C</Avatar></Badge>
            <Badge $low><Avatar $size={15}>C</Avatar></Badge>
          </App_>
        </Apps>
        <Tray>
          <TrayButton aria-label="Show hidden icons"><svg width="16" height="10" fill="none" stroke="#111" strokeWidth="1.500"><path d="M1 9l7-7 7 7" /></svg></TrayButton>
          <TrayButton aria-label="Network"><svg width="17" height="18" fill="none" stroke="#333" strokeWidth="1.300"><path d="M1 17A15 15 0 0116 2M5 17A11 11 0 0116 6M9 17a7 7 0 017-7" /><circle cx="14" cy="15.500" r="1.500" fill="#333" /></svg></TrayButton>
          <TrayButton aria-label="Battery"><svg width="20" height="18"><path d="M1 3h17v10H1z" fill="none" stroke="#111" strokeWidth="1.500" /><path d="M3 5h11v6H3z" fill="#222" /><circle cx="14" cy="12" r="5.500" fill="#138a1b" /><path d="M14 9v6M11.500 12h5" stroke="#fff" strokeWidth="1.300" /></svg></TrayButton>
          <TrayButton aria-label="Volume"><svg width="20" height="18" fill="none" stroke="#111" strokeWidth="1.300"><path d="M1 6h3l4-4v14l-4-4H1zM11 6c1.500 2 1.500 4 0 6M14 4c2.500 3 2.500 7 0 10M17 2c3 4 3 10 0 14" /></svg></TrayButton>
          <TrayButton aria-label="Sync"><svg width="20" height="18"><path d="M3 13a5 5 0 010-8 6 6 0 0111-2c4 0 5 5 3 8z" fill="#777" /><circle cx="14" cy="12" r="5.500" fill="#e0242e" /><path d="M12 10l4 4M16 10l-4 4" stroke="#fff" strokeWidth="1.400" /></svg></TrayButton>
          <Clock>4:48 PM<br />4/28/2025</Clock>
          <Notice aria-label="Notifications"><svg width="20" height="20"><path d="M0 0h20v16h-7l-3 4v-4H0z" fill="#000" /><path d="M4 5h12M4 8h12M4 11h8" stroke="#fff" strokeWidth="1.300" /></svg></Notice>
        </Tray>
      </Taskbar>
    </Desktop>
  );
}
